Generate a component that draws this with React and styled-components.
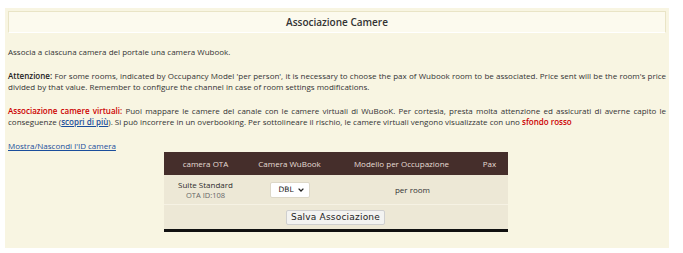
import React from 'react';
import styled, { createGlobalStyle } from 'styled-components';

const GlobalStyle = createGlobalStyle`
  html, body {
    margin: 0;
    background: #ffffff;
  }
  body {
    padding: 8px 14px 8px 5px;
    font-family: 'Open Sans', 'DejaVu Sans', sans-serif;
  }
`;

const Panel = styled.div`
  background: #f8f5e2;
  padding: 3px 3px 16px;
  color: #333;
  font-size: 8px;
  line-height: 11px;
`;

const TitleBar = styled.div`
  background: #fcfaee;
  border: 1px solid #e9e4c6;
  border-bottom-color: #ffffff;
  height: 20px;
  display: flex;
  align-items: center;
  justify-content: center;
  font-size: 10px;
  font-weight: 600;
  color: #333;
`;

const Para = styled.p`
  margin: ${p => p.$top || 13}px 0 0;
  text-align: justify;
`;

const Strong = styled.span`
  font-weight: 600;
  color: ${p => p.$red ? '#cc0000' : '#222'};
`;

const Link = styled.a`
  color: #1b4e9c;
  text-decoration: underline;
  font-weight: ${p => p.$bold ? 600 : 400};
  cursor: pointer;
`;

const TableWrap = styled.div`
  display: flex;
  justify-content: center;
  margin-top: 1px;
  padding-right: 3px;
`;

const Table = styled.table`
  width: 344px;
  border-collapse: collapse;
  table-layout: fixed;
  border-bottom: 3px solid #111;
`;

const HeadCell = styled.th`
  background: #452e2b;
  color: #e6ddd5;
  font-weight: 400;
  font-size: 8px;
  height: 23px;
  padding: 0;
  text-align: center;
`;

const Cell = styled.td`
  background: #ede8d6;
  text-align: center;
  font-size: 8px;
  padding: 0 ${p => p.$padRight || 0}px 0 0;
  height: ${p => p.$h || 29}px;
  border-top: ${p => p.$line ? '1px solid #f6f2e4' : 'none'};
  color: #333;
`;

const RoomName = styled.div`
  font-size: 8px;
  line-height: 10px;
  color: #2c2c2c;
`;

const RoomId = styled.div`
  font-size: 7.5px;
  line-height: 10px;
  color: #666;
`;

const Select = styled.div`
  display: inline-flex;
  align-items: center;
  justify-content: space-between;
  width: 40px;
  height: 16px;
  box-sizing: border-box;
  padding: 0 5px 0 8px;
  background: #fff;
  border: 1px solid #ddd8c8;
  border-radius: 2px;
  font-family: 'DejaVu Sans', sans-serif;
  font-size: 7.5px;
  color: #222;
`;

const SaveButton = styled.button`
  font-family: 'DejaVu Sans', sans-serif;
  font-size: 9px;
  color: #222;
  background: #f3f3f1;
  border: 1px solid #cfcfcf;
  border-radius: 2px;
  height: 15px;
  padding: 0 4px;
  letter-spacing: 0.2px;
  line-height: 13px;
`;

const Chevron = () => (
  <svg width="6" height="4" viewBox="0 0 6 4">
    <path d="M0.6 0.6 L3 3 L5.4 0.6" fill="none" stroke="#222" strokeWidth="1.3" />
  </svg>
);

export default function App() {
  return (
    <>
      <GlobalStyle />
      <Panel>
        <TitleBar>Associazione Camere</TitleBar>
        <Para $top={13}>Associa a ciascuna camera del portale una camera Wubook.</Para>
        <Para>
          <Strong>Attenzione:</Strong> For some rooms, indicated by Occupancy Model 'per person', it is necessary to choose the pax of Wubook room to be associated. Price sent will be the room's price divided by that value. Remember to configure the channel in case of room settings modifications.
        </Para>
        <Para>
          <Strong $red>Associazione camere virtuali:</Strong> Puoi mappare le camere del canale con le camere virtuali di WuBooK. Per cortesia, presta molta attenzione ed assicurati di averne capito le conseguenze (<Link $bold>scopri di più</Link>). Si può incorrere in un overbooking. Per sottolineare il rischio, le camere virtuali vengono visualizzate con uno <Strong $red>sfondo rosso</Strong>
        </Para>
        <Para>
          <Link>Mostra/Nascondi l'ID camera</Link>
        </Para>
        <TableWrap>
          <Table>
            <colgroup>
              <col style={{ width: 84 }} />
              <col style={{ width: 84 }} />
              <col style={{ width: 140 }} />
              <col style={{ width: 36 }} />
            </colgroup>
            <thead>
              <tr>
                <HeadCell>camera OTA</HeadCell>
                <HeadCell>Camera WuBook</HeadCell>
                <HeadCell>Modello per Occupazione</HeadCell>
                <HeadCell>Pax</HeadCell>
              </tr>
            </thead>
            <tbody>
              <tr>
                <Cell>
                  <RoomName>Suite Standard</RoomName>
                  <RoomId>OTA ID:108</RoomId>
                </Cell>
                <Cell>
                  <Select>DBL <Chevron /></Select>
                </Cell>
                <Cell colSpan={2} $padRight={14}>per room</Cell>
              </tr>
              <tr>
                <Cell colSpan={4} $h={24} $line>
                  <SaveButton>Salva Associazione</SaveButton>
                </Cell>
              </tr>
            </tbody>
          </Table>
        </TableWrap>
      </Panel>
    </>
  );
}
